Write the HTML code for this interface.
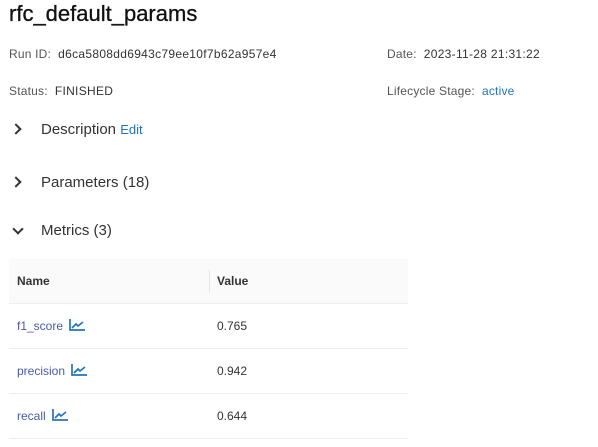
<!DOCTYPE html>
<html><head><style>
body{margin:0;width:598px;height:447px;overflow:hidden;background:#fff;font-family:"Liberation Sans",sans-serif;color:#333;position:relative}
.a{position:absolute;white-space:nowrap}
h1{position:absolute;left:9px;top:0px;margin:0;font-size:22px;font-weight:normal;color:#111;line-height:28px;-webkit-text-stroke:0.3px #111}
.lab{color:#555;font-size:12px;letter-spacing:0.2px}
.val{color:#333;font-size:12px;letter-spacing:0.3px}
.sec{font-size:15px;color:#333}
.chev{position:absolute;width:6px;height:6px;border-right:2px solid #333;border-bottom:2px solid #333}
.blue{color:#2374bb}
.mn{color:#4a5aa8}
table{position:absolute;left:9px;top:259px;width:399px;border-collapse:collapse;font-size:12px}
th{background:#fafafa;text-align:left;font-weight:600;height:44px;padding:0 0 0 8px;border-bottom:1px solid #eee;color:#333}
td{height:44px;padding:0 0 0 8px;border-bottom:1px solid #eee}
th.v{position:relative}
th.v:before{content:"";position:absolute;left:0;top:11px;height:22px;border-left:1px solid #e6e6e6}
</style></head><body>
<h1>rfc_default_params</h1>
<div class="a lab" style="left:9px;top:47px">Run ID:&nbsp; <span class="val">d6ca5808dd6943c79ee10f7b62a957e4</span></div>
<div class="a lab" style="left:387px;top:47px">Date:&nbsp; <span class="val">2023-11-28 21:31:22</span></div>
<div class="a lab" style="left:9px;top:84px">Status:&nbsp; <span class="val">FINISHED</span></div>
<div class="a lab" style="left:387px;top:84px">Lifecycle Stage:&nbsp; <span class="blue">active</span></div>
<div class="chev" style="left:12px;top:125px;transform:rotate(-45deg)"></div>
<div class="a sec" style="left:41px;top:121px">Description <span class="blue" style="font-size:13px">Edit</span></div>
<div class="chev" style="left:12px;top:178px;transform:rotate(-45deg)"></div>
<div class="a sec" style="left:41px;top:174px">Parameters (18)</div>
<div class="chev" style="left:14px;top:225px;transform:rotate(45deg)"></div>
<div class="a sec" style="left:41px;top:222px">Metrics (3)</div>
<table>
<tr><th style="width:192px">Name</th><th class="v">Value</th></tr>
<tr><td class="mn">f1_score <svg width="16" height="12" viewBox="0 0 16 12" style="vertical-align:-1px;margin-left:3px"><path d="M1 0V11H16M3 9L7 5L9 7L14 3" stroke="#2374bb" stroke-width="1.7" fill="none"/></svg></td><td>0.765</td></tr>
<tr><td class="mn">precision <svg width="16" height="12" viewBox="0 0 16 12" style="vertical-align:-1px;margin-left:3px"><path d="M1 0V11H16M3 9L7 5L9 7L14 3" stroke="#2374bb" stroke-width="1.7" fill="none"/></svg></td><td>0.942</td></tr>
<tr><td class="mn">recall <svg width="16" height="12" viewBox="0 0 16 12" style="vertical-align:-1px;margin-left:3px"><path d="M1 0V11H16M3 9L7 5L9 7L14 3" stroke="#2374bb" stroke-width="1.7" fill="none"/></svg></td><td>0.644</td></tr>
</table>
</body></html>
